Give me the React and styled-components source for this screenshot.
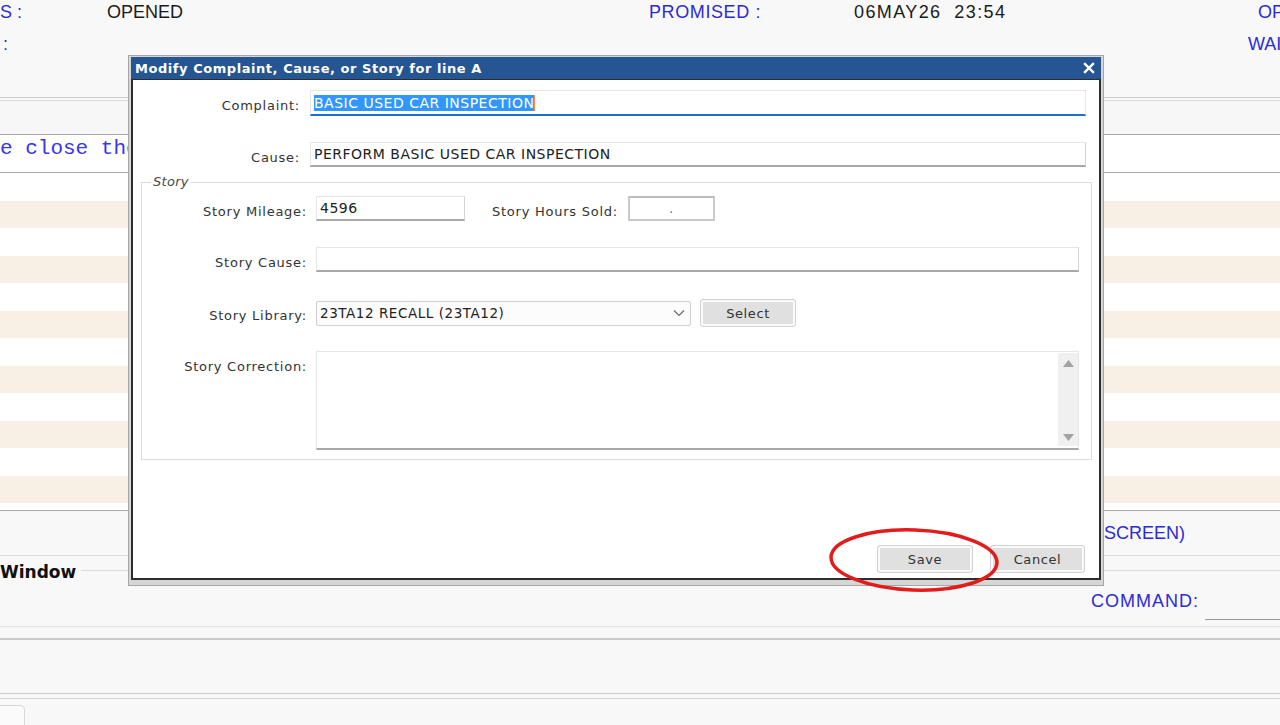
import React from "react";
import styled, { createGlobalStyle } from "styled-components";

const GlobalStyle = createGlobalStyle`
  html, body { margin: 0; padding: 0; background: #f8f8f8; }
  body { overflow: hidden; }
`;

const Page = styled.div`
  position: relative;
  width: 1280px;
  height: 725px;
  overflow: hidden;
  background: #f8f8f8;
  font-family: "Liberation Sans", Arial, sans-serif;
`;

/* ---------- background screen ---------- */

const Header = styled.header`
  height: 98px;
  box-sizing: border-box;
  border-bottom: 1px solid #c9c9c9;
`;

const HeaderRow = styled.div`
  display: grid;
  grid-template-columns: ${(p) => p.$cols};
  height: 24px;
  margin-top: ${(p) => p.$offset || 0}px;
  font-size: 18px;
  line-height: 24px;
  white-space: pre;
`;

const Field = styled.span`
  color: ${(p) => (p.$label ? "#2b2bd6" : "#1b1b1b")};
  padding-left: ${(p) => p.$indent || 0}px;
  letter-spacing: ${(p) => p.$spacing || 0}px;
  overflow: hidden;
`;

const SubBand = styled.div`
  margin-top: 2px;
  height: 33px;
  background: #f7f7f7;
  border-top: 1px solid #dadada;
  border-bottom: 1px solid #a9a9a9;
`;

const MonoRow = styled.div`
  height: 37px;
  background: #fff;
  border-bottom: 1px solid #a9a9a9;
  font-family: "Liberation Mono", "Courier New", monospace;
  font-size: 21px;
  line-height: 27px;
  color: #3535f2;
  white-space: pre;
`;

const Stripes = styled.div`
  display: flex;
  flex-direction: column;
  height: 337px;
  background: #fff;
  border-bottom: 1px solid #a9a9a9;
`;

const Stripe = styled.div`
  height: 27.5px;
  flex: none;
  background: ${(p) => (p.$odd ? "#f8f0e4" : "#fff")};
`;

const ScreenRow = styled.div`
  height: 45px;
  box-sizing: border-box;
  border-bottom: 1px solid #dedede;
  display: flex;
  justify-content: flex-end;
  align-items: center;
  padding-right: 95px;
  font-size: 18px;
  color: #2b2bd6;
`;

const CommandSection = styled.section`
  height: 71px;
  box-sizing: border-box;
  border-bottom: 1px solid #e2e2e2;
  display: flex;
  flex-direction: column;
`;

const LegendRow = styled.div`
  display: flex;
  align-items: center;
  margin-top: 5px;
  height: 22px;
`;

const LegendText = styled.span`
  font-family: "DejaVu Sans", Verdana, sans-serif;
  font-weight: bold;
  font-size: 17px;
  color: #111;
  margin-right: 5px;
`;

const LegendLine = styled.div`
  flex: 1;
  height: 1px;
  margin-top: -4px;
  background: #dcdcdc;
`;

const CommandRow = styled.div`
  display: flex;
  align-items: flex-start;
  justify-content: flex-end;
  margin-top: 6px;
`;

const CommandLabel = styled.span`
  font-size: 18px;
  line-height: 24px;
  letter-spacing: 1px;
  color: #2b2bd6;
`;

const CommandInput = styled.div`
  width: 75px;
  height: 30px;
  margin-left: 6px;
  border-bottom: 1px solid #9a9a9a;
`;

const Gap = styled.div`
  height: 11px;
  border-bottom: 2px solid #c9c9c9;
`;

const LowerBand = styled.div`
  height: 53px;
  background: #f8f8f8;
  border-bottom: 1px solid #c9c9c9;
`;

const TabStrip = styled.div`
  height: 28px;
  border-top: 1px solid #d4d4d4;
  margin-top: 4px;
  padding-top: 6px;
  box-sizing: border-box;
`;

const Tab = styled.div`
  width: 24px;
  height: 30px;
  border: 1px solid #d8d8d8;
  border-left: none;
  border-top-right-radius: 5px;
  background: #fbfbfb;
`;

/* ---------- modal dialog ---------- */

const Dialog = styled.div`
  position: absolute;
  left: 128px;
  top: 55px;
  width: 976px;
  height: 531px;
  box-sizing: border-box;
  border: 1px solid #a6a6a6;
  background: #d6d6d6;
  padding: 1px 2px 5px 2px;
  display: flex;
  flex-direction: column;
  font-family: "DejaVu Sans", Verdana, sans-serif;
`;

const TitleBar = styled.div`
  height: 22px;
  flex: none;
  background: #255592;
  color: #fff;
  font-weight: bold;
  font-size: 13px;
  letter-spacing: 0.55px;
  display: flex;
  align-items: center;
  justify-content: space-between;
  padding: 0 6px 0 4px;
`;

const CloseButton = styled.button`
  border: none;
  background: none;
  padding: 0;
  width: 12px;
  height: 12px;
  display: flex;
  cursor: pointer;
`;

const Body = styled.div`
  flex: 1;
  background: #fff;
  border: 2px solid #2d2d2d;
  border-top-width: 1px;
  display: flex;
  flex-direction: column;
  padding-top: 10px;
  font-size: 13px;
  letter-spacing: 0.75px;
  color: #333;
`;

const Row = styled.div`
  display: flex;
  align-items: ${(p) => (p.$top ? "flex-start" : "center")};
  margin-top: ${(p) => p.$mt || 0}px;
  margin-right: ${(p) => p.$mr || 0}px;
`;

const Label = styled.label`
  width: ${(p) => p.$w}px;
  flex: none;
  text-align: right;
  margin-right: ${(p) => p.$gap}px;
  padding-top: ${(p) => p.$pt ?? 6}px;
  line-height: 16px;
  white-space: nowrap;
`;

const Input = styled.div`
  box-sizing: border-box;
  height: ${(p) => p.$h || 25}px;
  width: ${(p) => (p.$w ? `${p.$w}px` : "auto")};
  flex: ${(p) => (p.$w ? "none" : 1)};
  background: #fff;
  border: 1px solid #e6e6e6;
  border-bottom: 2px solid ${(p) => (p.$focus ? "#1b6fd0" : "#a8a8a8")};
  border-right-color: ${(p) => (p.$focus ? "#e6e6e6" : "#d4d4d4")};
  padding-left: 3px;
  display: flex;
  align-items: center;
  font-size: 14px;
  letter-spacing: 0.5px;
  color: #222;
  white-space: nowrap;
  overflow: hidden;
`;

const BoxInput = styled.div`
  box-sizing: border-box;
  height: 25px;
  width: 87px;
  flex: none;
  border: 2px solid #cacaca;
  border-top-color: #bcbcbc;
  text-align: center;
  line-height: 22px;
  color: #3a6fb5;
`;

const Selected = styled.span`
  background: #3297fd;
  color: #fff;
  box-shadow: 1px 0 0 #ff8a3d;
`;

const StoryFieldset = styled.fieldset`
  margin: 7px 7px 0 8px;
  padding: 0 12px 9px 0;
  border: 1px solid #dcdcdc;
  min-width: 0;
`;

const StoryLegend = styled.legend`
  margin-left: 9px;
  padding: 0 2px;
  font-style: italic;
  line-height: 16px;
  letter-spacing: 0.3px;
  color: #4a4a4a;
`;

const InlineLabel = styled.span`
  margin: 6px 10px 0 27px;
  line-height: 16px;
  white-space: nowrap;
`;

const SelectBox = styled.div`
  box-sizing: border-box;
  width: 375px;
  height: 25px;
  flex: none;
  border: 1px solid #cfcfcf;
  border-radius: 2px;
  background: #fcfcfc;
  display: flex;
  align-items: center;
  justify-content: space-between;
  padding: 0 5px 0 3px;
  font-size: 13.5px;
  letter-spacing: 0.55px;
  color: #222;
`;

const Button = styled.button`
  box-sizing: border-box;
  width: ${(p) => p.$w || 96}px;
  height: 28px;
  margin-left: ${(p) => p.$ml || 0}px;
  border: 1px solid #d2d2d2;
  border-radius: 3px;
  background: #e0e0e0;
  box-shadow: inset 0 0 0 2px #fafafa;
  font-family: "DejaVu Sans", Verdana, sans-serif;
  font-size: 13px;
  letter-spacing: 0.6px;
  color: #333;
  padding: 0;
  cursor: pointer;
`;

const TextArea = styled.div`
  flex: 1;
  height: 99px;
  box-sizing: border-box;
  border: 1px solid #e6e6e6;
  border-bottom: 2px solid #a8a8a8;
  display: flex;
  justify-content: flex-end;
  padding: 1px 0 2px;
`;

const ScrollTrack = styled.div`
  width: 20px;
  background: #f0f0f0;
  display: flex;
  flex-direction: column;
  justify-content: space-between;
  align-items: center;
  padding: 7px 0 5px;
  box-sizing: border-box;
`;

const Footer = styled.div`
  margin-top: auto;
  display: flex;
  justify-content: flex-end;
  gap: 17px;
  padding: 0 14px 5px 0;
`;

const Annotation = styled.svg`
  position: absolute;
  left: 828px;
  top: 527px;
  overflow: visible;
`;

const App = () => {
  const stripes = Array.from({ length: 12 }, (_, i) => i);

  return (
    <Page>
      <GlobalStyle />
      <Header>
        <HeaderRow $cols="107px 542px 205px 404px 1fr">
          <Field $label>S :</Field>
          <Field>OPENED</Field>
          <Field $label $spacing={0.6}>PROMISED :</Field>
          <Field $spacing={1.4}>06MAY26  23:54</Field>
          <Field $label>OPEN</Field>
        </HeaderRow>
        <HeaderRow $cols="1248px 1fr" $offset={8}>
          <Field $label $indent={3}>:</Field>
          <Field $label>WAITER</Field>
        </HeaderRow>
      </Header>
      <SubBand />
      <MonoRow>e close the</MonoRow>
      <Stripes>
        {stripes.map((i) => (
          <Stripe key={i} $odd={i % 2 === 1} />
        ))}
      </Stripes>
      <ScreenRow>(RETURN TO PREVIOUS SCREEN)</ScreenRow>
      <CommandSection>
        <LegendRow>
          <LegendText>Window</LegendText>
          <LegendLine />
        </LegendRow>
        <CommandRow>
          <CommandLabel>COMMAND:</CommandLabel>
          <CommandInput />
        </CommandRow>
      </CommandSection>
      <Gap />
      <LowerBand />
      <TabStrip>
        <Tab />
      </TabStrip>

      <Dialog>
        <TitleBar>
          <span>Modify Complaint, Cause, or Story for line A</span>
          <CloseButton aria-label="Close">
            <svg width="12" height="12" viewBox="0 0 12 12">
              <path d="M2 2 L10 10 M10 2 L2 10" stroke="#fff" strokeWidth="2.4" strokeLinecap="square" />
            </svg>
          </CloseButton>
        </TitleBar>
        <Body>
          <Row $mr={13}>
            <Label $w={167} $gap={10}>Complaint:</Label>
            <Input $h={26} $focus>
              <Selected>BASIC USED CAR INSPECTION</Selected>
            </Input>
          </Row>
          <Row $mt={26} $mr={13}>
            <Label $w={167} $gap={10}>Cause:</Label>
            <Input>PERFORM BASIC USED CAR INSPECTION</Input>
          </Row>

          <StoryFieldset>
            <StoryLegend>Story</StoryLegend>
            <Row $mt={6}>
              <Label $w={165} $gap={9}>Story Mileage:</Label>
              <Input $w={149}>4596</Input>
              <InlineLabel>Story Hours Sold:</InlineLabel>
              <BoxInput>.</BoxInput>
            </Row>
            <Row $mt={26}>
              <Label $w={165} $gap={9}>Story Cause:</Label>
              <Input />
            </Row>
            <Row $mt={27}>
              <Label $w={165} $gap={9}>Story Library:</Label>
              <SelectBox>
                <span>23TA12 RECALL (23TA12)</span>
                <svg width="12" height="8" viewBox="0 0 12 8">
                  <path d="M1 1.5 L6 6.5 L11 1.5" fill="none" stroke="#6a6a6a" strokeWidth="1.2" />
                </svg>
              </SelectBox>
              <Button $ml={9}>Select</Button>
            </Row>
            <Row $mt={24} $top>
              <Label $w={165} $gap={9} $pt={8}>Story Correction:</Label>
              <TextArea>
                <ScrollTrack>
                  <svg width="11" height="7" viewBox="0 0 11 7">
                    <path d="M5.5 0 L11 7 L0 7 Z" fill="#a3a3a3" />
                  </svg>
                  <svg width="11" height="7" viewBox="0 0 11 7">
                    <path d="M0 0 L11 0 L5.5 7 Z" fill="#a3a3a3" />
                  </svg>
                </ScrollTrack>
              </TextArea>
            </Row>
          </StoryFieldset>

          <Footer>
            <Button>Save</Button>
            <Button $w={95}>Cancel</Button>
          </Footer>
        </Body>
      </Dialog>

      <Annotation width="172" height="66" viewBox="0 0 172 66">
        <ellipse
          cx="86"
          cy="33"
          rx="83"
          ry="30"
          fill="none"
          stroke="#e21b1b"
          strokeWidth="3.5"
          transform="rotate(2 86 33)"
        />
      </Annotation>
    </Page>
  );
};

export default App;
